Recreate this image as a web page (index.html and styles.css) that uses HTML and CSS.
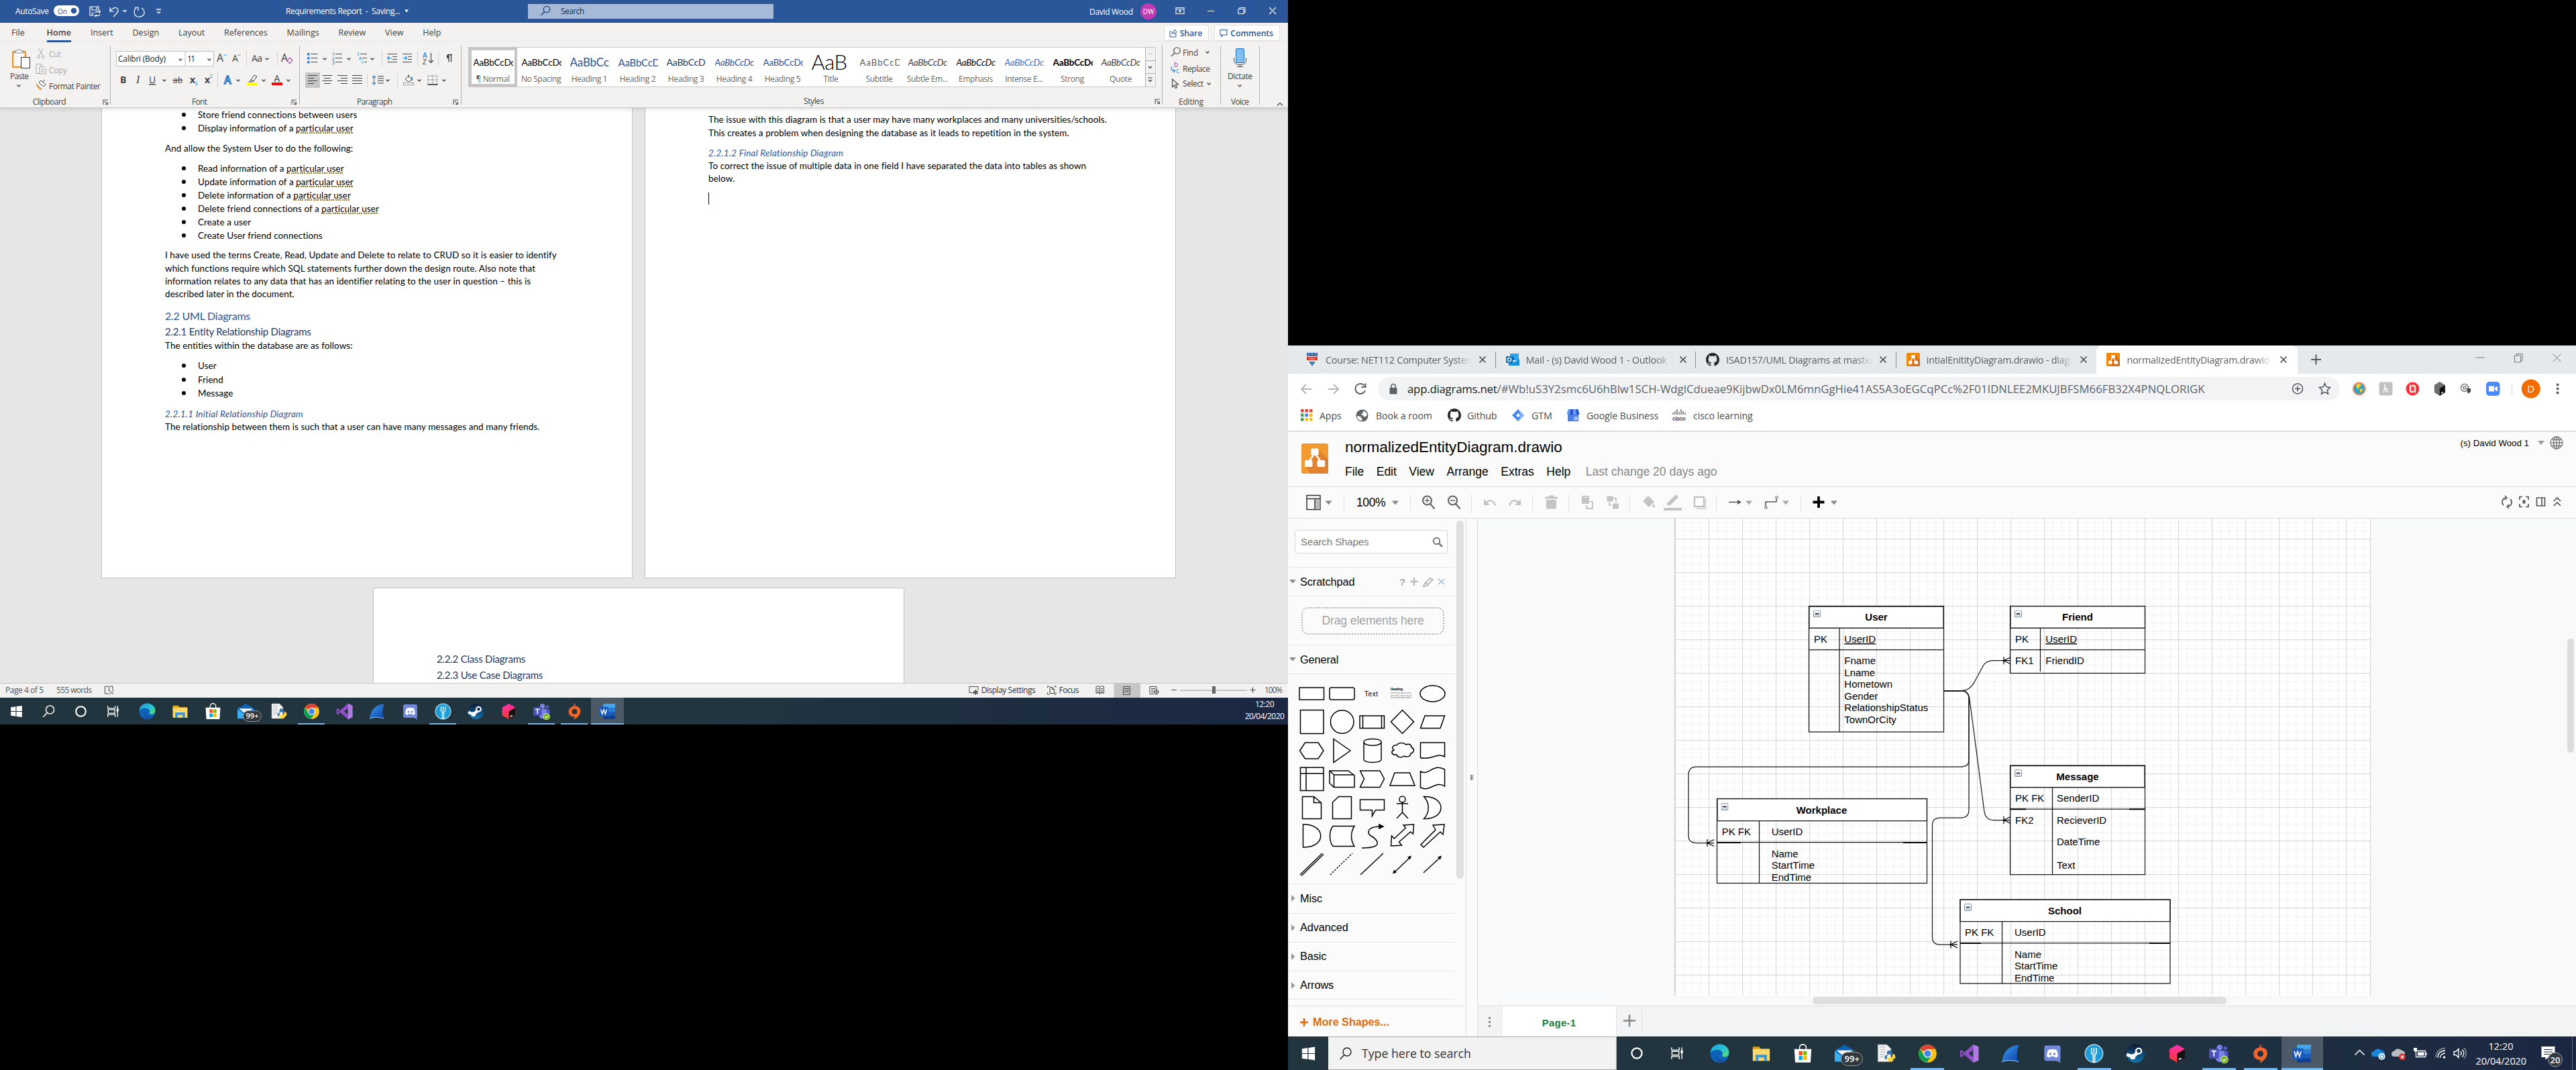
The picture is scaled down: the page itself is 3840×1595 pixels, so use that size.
FILE: index.html
```html
<!DOCTYPE html>
<html lang="en">
<head>
<meta charset="utf-8">
<title>Desktop</title>
<link rel="stylesheet" href="styles.css">
</head>
<body>
<svg class="defs" width="0" height="0" aria-hidden="true">
  <defs>
    <linearGradient id="edgeA" x1="0" y1="0" x2="1" y2="1"><stop offset="0" stop-color="#1b9de2"/><stop offset=".55" stop-color="#2bc3d2"/><stop offset="1" stop-color="#5fe05a"/></linearGradient>
    <linearGradient id="sharkA" x1="0" y1="0" x2="1" y2="1"><stop offset="0" stop-color="#3aa0f0"/><stop offset="1" stop-color="#0b3fa8"/></linearGradient>
    <linearGradient id="redA" x1="0" y1="0" x2="0" y2="1"><stop offset="0" stop-color="#ff2fb0"/><stop offset="1" stop-color="#ff3a2a"/></linearGradient>
    <linearGradient id="steamA" x1="0" y1="0" x2="0" y2="1"><stop offset="0" stop-color="#0b1838"/><stop offset="1" stop-color="#1277b0"/></linearGradient>
    <pattern id="minor" width="12.5" height="12.5" patternUnits="userSpaceOnUse" x="2547.5" y="803.5"><path d="M0 .5H12.5M.5 0V12.5" stroke="#f2f2f2" fill="none"/></pattern>
    <pattern id="major" width="50" height="50" patternUnits="userSpaceOnUse" x="2547" y="803"><path d="M0 .5H50M.5 0V50" stroke="#d9d9d9" fill="none"/></pattern>
    <linearGradient id="btn" x1="0" y1="0" x2="0" y2="1"><stop offset="0" stop-color="#fff"/><stop offset="1" stop-color="#c3d0dc"/></linearGradient>
    <symbol id="chev" viewBox="0 0 8 6"><path d="M1.5 1.5 4 4 6.500 1.500" fill="none" stroke="#444" stroke-width="1.300"/></symbol>
    <symbol id="launch" viewBox="0 0 9 9"><path d="M1 8V1H8M3 3 7.500 7.500M7.500 4V7.500H4" fill="none" stroke="#555" stroke-width="1.100"/></symbol>
    <symbol id="win" viewBox="0 0 24 24"><path d="M4 6 11 5V11.500H4ZM12 4.900 20 3.800V11.500H12ZM4 12.500H11V19L4 18ZM12 12.500H20V20.200L12 19.100Z" fill="#fff"/></symbol>
    <symbol id="mag" viewBox="0 0 24 24"><circle cx="14" cy="9.500" r="5.800" fill="none" stroke="#fff" stroke-width="1.400"/><path d="M10 13.800 4 20" stroke="#fff" stroke-width="1.400"/></symbol>
    <symbol id="cort" viewBox="0 0 24 24"><circle cx="12" cy="12" r="7" fill="none" stroke="#fff" stroke-width="2"/></symbol>
    <symbol id="tview" viewBox="0 0 24 24"><path d="M4.500 4V7.500H15V4M4.500 20V16.500H15V20M5 9.500H14.500V14.500H5ZM18.500 4V20" fill="none" stroke="#fff" stroke-width="1.300"/><path d="M17 8h3v4h-3z" fill="#fff"/></symbol>
    <symbol id="edge" viewBox="0 0 24 24"><circle cx="12" cy="12" r="11.500" fill="#0d63b8"/><path d="M.6 11C1 4.500 6 .5 12 .5c7 0 11.500 5 11.500 10 0 3.500-2.500 5.500-5.500 5.500-2 0-3.500-.5-3-2 .8-1 .8-2 .5-3C14.500 8 11 7 8 7.300 4 7.700 1.500 9.500.6 11Z" fill="url(#edgeA)"/><path d="M8.500 13.500c0 4 4 7 8.500 6.500 2-.2 3.500-1 4.500-1.700C19 22.500 15.500 23.500 12 23.500 9 22 7 18.500 8.500 13.500Z" fill="#1a4fa0"/></symbol>
    <symbol id="folder" viewBox="0 0 24 24"><path d="M1.500 3.500h8l2 2.500H22v4H1.500Z" fill="#e0a012"/><path d="M1.500 6.500H22.500V21H1.500Z" fill="#ffd867"/><path d="M5 21V13.500H19V21H15.500V17H8.500V21Z" fill="#3b97d9"/></symbol>
    <symbol id="store" viewBox="0 0 24 24"><path d="M8 7V4.500a4 3.800 0 0 1 8 0V7" fill="none" stroke="#fff" stroke-width="1.300"/><path d="M1.500 6.500h21L21.500 23h-19Z" fill="#fff"/><path d="M7 9h4.500v5H7Z" fill="#f25022"/><path d="M12.500 9H17v5h-4.500Z" fill="#7fba00"/><path d="M7 15h4.500v5H7Z" fill="#00a4ef"/><path d="M12.500 15H17v5h-4.500Z" fill="#ffb900"/></symbol>
    <symbol id="mail" viewBox="0 0 24 24"><path d="M0 8 12 1 24 8V21H0Z" fill="#0b64b5"/><path d="M2 8H22L12 16Z" fill="#f4f4f4"/><path d="M0 9 12 17 24 9V22H0Z" fill="#35b0f2"/></symbol>
    <symbol id="pyf" viewBox="0 0 24 24"><path d="M2 1H13L18 6V22H2Z" fill="#f3f3f3" stroke="#bbb" stroke-width=".6"/><path d="M4 4h7M4 7h7M4 10h7M4 13h6M4 16h5" stroke="#aaa" stroke-width=".8"/><path d="M17 8c-3 0-4 1-4 3v2h4.500v1H12c-1.500 0-2.500 2-1 5h2v-2c0-2 1-3 3-3h3V10c0-1-1-2-2-2Z" fill="#3776ab"/><path d="M20 12v2c0 2-1 3-3 3h-3v3c0 1.500 1.500 2 3.500 2s3.500-1 3.500-2v-1.500h2c1-2 .5-6-3-6.500Z" fill="#ffd43b"/></symbol>
    <symbol id="chrome" viewBox="0 0 24 24"><circle cx="12" cy="12" r="11" fill="#fbc116"/><path d="M12 12 2.500 6.500A11 11 0 0 1 21.500 6.500H12Z" fill="#db4437"/><path d="M2.500 6.500A11 11 0 0 0 11 23L16.700 14.700 12 12 7 13.500Z" fill="#0f9d58"/><circle cx="12" cy="12" r="5.200" fill="#fff"/><circle cx="12" cy="12" r="4.200" fill="#4285f4"/></symbol>
    <symbol id="vs" viewBox="0 0 24 24"><path d="M17 .8 23.500 3.500V20.500L17 23.200 6 13.500 2.500 16.500.8 15.500V8.500L2.500 7.500 6 10.500ZM17 7.500 11.500 12 17 16.500ZM2.800 10V14L5 12Z" fill="#8c4fc4" fill-rule="evenodd"/><path d="M17 .8 23.500 3.500V20.500L17 23.200Z" fill="#b07ae0"/></symbol>
    <symbol id="shark" viewBox="0 0 24 24"><path d="M1 22C3 9 10 2 22 1.500 19 8 19 15 21.500 22 15 20 7 20 1 22Z" fill="url(#sharkA)"/><path d="M1 22C7 20 15 20 21.500 22" stroke="#7ab6ff" stroke-width="1" fill="none"/></symbol>
    <symbol id="discord" viewBox="0 0 24 24"><rect x="2" y="2" width="20" height="19" rx="2.500" fill="#7289da"/><path d="M17 21H22V23.500Z" fill="#7289da"/><path d="M7 7.500C10 6.300 14 6.300 17 7.500 18.500 10 19 13 18.800 15.500 17.500 16.700 16.500 17 15.500 17L14.500 15.600H9.500L8.500 17C7.500 17 6.500 16.700 5.200 15.500 5 13 5.500 10 7 7.500Z" fill="#fff"/><circle cx="9.500" cy="12.500" r="1.500" fill="#7289da"/><circle cx="14.500" cy="12.500" r="1.500" fill="#7289da"/></symbol>
    <symbol id="fork" viewBox="0 0 24 24"><circle cx="12" cy="12" r="11" fill="#1d9cd8" stroke="#cfeaf7" stroke-width="1"/><path d="M9 5V10.500C9 12 10 13 11 13.300V22.500H13V13.300C14 13 15 12 15 10.500V5M12 5V12" fill="none" stroke="#fff" stroke-width="1.300"/></symbol>
    <symbol id="steam" viewBox="0 0 24 24"><circle cx="12" cy="12" r="11.300" fill="url(#steamA)"/><path d="M1 13 8 16" stroke="#fff" stroke-width="4"/><circle cx="15.800" cy="8.800" r="4.300" fill="#fff"/><circle cx="15.800" cy="8.800" r="2.300" fill="#12305c"/><circle cx="8.500" cy="16" r="3.300" fill="#fff"/><path d="M9 13 13 9 16 12.500 11 16.500Z" fill="#fff"/></symbol>
    <symbol id="hex" viewBox="0 0 24 24"><path d="M12 1 21.500 6.500V17.500L12 23 2.500 17.500V6.500Z" fill="url(#redA)"/><path d="M12 12 21.500 6.500V17.500L12 23Z" fill="#111"/><path d="M14 19.500 17 17.800" stroke="#fff" stroke-width="1.500"/></symbol>
    <symbol id="teams" viewBox="0 0 24 24"><circle cx="13" cy="4.500" r="3.500" fill="#7b83eb"/><circle cx="20" cy="5.500" r="2.500" fill="#5059c9"/><path d="M8 8.500H19V17a5 5 0 0 1-11 0Z" fill="#7b83eb"/><path d="M19 9h4.500v6a3 3 0 0 1-4.500 3Z" fill="#5059c9"/><rect y="6" width="12" height="12" rx="1" fill="#4b53bc"/><path d="M3 9H9M6 9V15.500" stroke="#fff" stroke-width="1.500"/><circle cx="19" cy="19.500" r="4.500" fill="#6bb700" stroke="#e8f5d8" stroke-width=".8"/><path d="M16.800 19.500 18.500 21.200 21.300 18" stroke="#fff" fill="none" stroke-width="1.200"/></symbol>
    <symbol id="origin" viewBox="0 0 24 24"><path d="M13.500 0C11 2 10.500 3 11 4.500 6 5 3.500 8.500 3.500 12.500 3.500 17 7 19.800 12 20 12 22 11.500 23 10.500 24 14.500 22 20.500 18 20.500 11.500 20.500 7 17 4.500 13 4.300 12.500 3 12.500 2 13.500 0ZM12 8.500a3.700 3.700 0 1 1 0 7.400 3.700 3.700 0 0 1 0-7.400Z" fill="#f0652a" fill-rule="evenodd"/></symbol>
    <symbol id="word" viewBox="0 0 24 24"><path d="M6 1H23V7H6Z" fill="#41a5ee"/><path d="M6 7H23V12.500H6Z" fill="#2b7cd3"/><path d="M6 12.500H23V18H6Z" fill="#185abd"/><path d="M6 18H23V23H6Z" fill="#103f91"/><rect x="0" y="5.500" width="13.500" height="13.500" rx="1" fill="#185abd"/><path d="M2.500 9 4.500 15.500 6.700 9.500 9 15.500 11 9" stroke="#fff" fill="none" stroke-width="1.400"/></symbol>
    <symbol id="gh" viewBox="0 0 16 16"><path fill="#24292e" fill-rule="evenodd" d="M8 0C3.580 0 0 3.580 0 8c0 3.540 2.290 6.530 5.470 7.590.4.070.550-.17.550-.38 0-.19-.01-.82-.01-1.490-2.010.37-2.530-.49-2.690-.94-.09-.23-.48-.94-.82-1.130-.28-.15-.68-.52-.01-.53.630-.01 1.080.58 1.230.82.720 1.210 1.870.87 2.330.66.070-.52.280-.87.510-1.070-1.780-.2-3.640-.89-3.640-3.950 0-.87.310-1.590.82-2.150-.08-.2-.36-1.020.08-2.120 0 0 .67-.21 2.200.82.640-.18 1.320-.27 2-.27s1.360.09 2 .27c1.530-1.040 2.200-.82 2.200-.82.440 1.100.16 1.920.08 2.120.51.560.82 1.270.82 2.150 0 3.070-1.870 3.750-3.650 3.950.29.25.54.730.54 1.480 0 1.070-.01 1.930-.01 2.200 0 .21.150.46.550.38A8.010 8.010 0 0 0 16 8c0-4.420-3.580-8-8-8Z"/></symbol>
    <symbol id="dio" viewBox="0 0 20 20"><rect width="20" height="20" rx="1.500" fill="#f08705"/><path d="M12 3 20 11V18.500Q20 20 18.500 20H8L4 16 9 9Z" fill="#df6c0c"/><path d="M9.800 6 6 13M10.200 6 14 13" stroke="#fff" stroke-width="1.300"/><rect x="7.200" y="3.200" width="5.600" height="4.600" rx=".8" fill="#fff"/><rect x="3" y="12" width="5.500" height="4.800" rx=".8" fill="#fff"/><rect x="11.500" y="12" width="5.500" height="4.800" rx=".8" fill="#fff"/></symbol>
    <symbol id="close" viewBox="0 0 12 12"><path d="M1.500 1.500 10.500 10.500M10.500 1.500 1.500 10.500" stroke="#4a4d51" stroke-width="1.700"/></symbol>
    <symbol id="foot" viewBox="-12 -7 14 14" overflow="visible"><path d="M-12 0H0M-10 -5.500V5.500M0 -5-10 0 0 5" fill="none" stroke="#000" stroke-width="1.250"/></symbol>
    <symbol id="fold" viewBox="0 0 11 11"><rect x=".5" y=".5" width="10" height="10" rx="1" fill="url(#btn)" stroke="#8496a8"/><path d="M3 5.500H8" stroke="#000" stroke-width="1.300"/></symbol>
  </defs>
</svg>

<section class="screen left">
  <header class="w-title">
    <svg class="w-bar" viewBox="0 0 1920 34">
      <rect x="787" y="6" width="366" height="22" fill="#a6b9d6"/>
      <text x="23" y="21" textLength="50" class="wt">AutoSave</text>
      <rect x="80" y="8" width="38" height="16" rx="8" fill="#fff"/><text x="86" y="20.500" class="on">On</text><circle cx="110" cy="16" r="4.300" fill="#2b579a"/>
      <g fill="none" stroke="#fff" stroke-width="1.200"><path d="M134 10h13v6M134 10v13h6M137 10v5h7v-5M137.500 23v-4h3"/><path d="M142 19a4 4 0 0 1 6.500-1M149 15v3.500h-3.500M149 21a4 4 0 0 1-6.500 1.500M142 25.500V22.500h3"/><path d="M164 11v6h6M164.500 16.500C168 11 173 10 175.500 13.500 177.500 17 173 21 169 25"/><path d="M183.500 15 186 17.500 188.500 15" stroke-width="1.500"/><path d="M203 12C199 15 199 22 204 24.500 210 27 216 22.500 215 17.500 214.500 14.500 213 13 211 12M201 11h5v5" /><path d="M233 14h7M234 17 236.500 19.500 239 17" stroke-width="1.300"/></g>
      <text x="426" y="20.500" textLength="171" class="wt" xml:space="preserve">Requirements Report  -  Saving...</text><path d="M603 14.500h6l-3 4Z" fill="#fff"/>
      <g fill="none" stroke="#1f3f78" stroke-width="1.300"><circle cx="815" cy="14" r="4.700"/><path d="M811.500 17.500 806.500 23"/></g><text x="836" y="21" textLength="35" class="wt navy">Search</text>
      <text x="1624" y="22" textLength="65" class="wt">David Wood</text><circle cx="1712" cy="17" r="12" fill="#c239b3"/><text x="1712" y="21" class="av">DW</text>
      <g fill="none" stroke="#fff" stroke-width="1.100"><path d="M1753 11.500h12v9h-12ZM1753 13.500h12M1759 19v-4M1757 17l2-2 2 2M1800 16.500h10M1846 13.500h8v7h-8ZM1848 13.500v-2h8v7h-2M1892 11l10 10M1902 11l-10 10"/></g>
    </svg>
  </header>
  <nav class="w-tabs">
    <span class="t1">File</span><b>Home</b><span>Insert</span><span>Design</span><span>Layout</span><span>References</span><span>Mailings</span><span>Review</span><span>View</span><span>Help</span>
    <div class="w-act">
      <button><svg width="12" height="14" viewBox="0 0 12 14"><path d="M3.500 5H1V13H10V8M4 9C4 6 6 4.500 8 4.500V2L11.500 5.500 8 9V6.500C6 6.500 5 7 4 9Z" fill="none" stroke="#2b579a"/></svg>Share</button>
      <button><svg width="12" height="13" viewBox="0 0 12 13"><path d="M1 1.500H11V9H5L3 11.500V9H1Z" fill="none" stroke="#2b579a" stroke-width="1.100"/></svg>Comments</button>
    </div>
  </nav>
  <div class="ribbon">
    <section class="g g1"><svg viewBox="0 63 164 97">
      <path d="M19 77h19v23H19z" fill="#ffe4b0" stroke="#e07a10" stroke-width="1.500"/><path d="M22 79v-3h3a4 4 0 0 1 7 0h3v3Z" fill="#fff" stroke="#666"/><path d="M21.500 79.500h14V86H31v12h-9.500Z" fill="#fafafa"/><rect x="31.500" y="85.500" width="13" height="16" fill="#fff" stroke="#333"/>
      <text x="15" y="117.500" textLength="28">Paste</text><use href="#chev" x="24" y="125" width="8" height="6"/>
      <g stroke="#aaa" fill="none"><path d="M57.500 72 64 83M64.500 72 58 83"/><circle cx="57.500" cy="85" r="1.800"/><circle cx="64.500" cy="85" r="1.800"/><path d="M59 109.500h-5v-14h8v3M59 99.500h6l3.500 3.500v7H59ZM61 104h5M61 107h5"/></g>
      <text x="73" y="84.500" textLength="18" class="dis">Cut</text><text x="73" y="109" textLength="27" class="dis">Copy</text>
      <path d="M54 125l8 8c-2 1-4 1-8-8Z" fill="#f7b254" stroke="#e07a10"/><path d="M58 123l7 6 3-3-7-6ZM63 123l4-4" fill="#fff" stroke="#444"/>
      <text x="73" y="132.500" textLength="77">Format Painter</text>
      <text x="48.700" y="156" textLength="50">Clipboard</text><use href="#launch" x="153" y="148" width="9" height="9"/></svg></section>
    <section class="g g2"><svg viewBox="165 63 281 97">
      <path d="M173.500 76.500h145v22h-145ZM276 76.500v22" fill="#fff" stroke="#c0c0c0"/><text x="176" y="92" textLength="71" class="k">Calibri (Body)</text><text x="279" y="92" textLength="12" class="k">11</text><use href="#chev" x="265" y="86" width="8" height="6"/><use href="#chev" x="308" y="86" width="8" height="6"/>
      <text x="323" y="92" class="i16">A</text><path d="M333.500 83.500l2-2 2 2M354.500 81l2 2 2-2" stroke="#2b88d8" fill="none"/><text x="346" y="92" class="i14">A</text>
      <path d="M367.500 77v21M413.500 77v21M324.500 109v21" stroke="#d0d0d0"/><text x="375" y="92" textLength="16" class="i14">Aa</text><use href="#chev" x="394" y="85" width="8" height="6"/>
      <text x="419" y="92" class="i16">A</text><path d="M428 91l4-5 4 3.500-4 5Z" fill="#fff" stroke="#a33ba8" stroke-width="1.200"/>
      <text x="179" y="124" class="i14 bb">B</text><text x="203" y="124" class="i14 se">I</text><text x="222" y="124" class="i14 un">U</text><use href="#chev" x="241" y="117" width="8" height="6"/>
      <text x="258" y="124" class="i12">ab</text><path d="M257 119.500h15" stroke="#444"/>
      <text x="283" y="124" class="i14 bb">x</text><text x="290.500" y="127" class="i8">2</text><text x="305" y="124" class="i14 bb">x</text><text x="312.500" y="116" class="i8">2</text>
      <text x="334" y="125" class="glow">A</text><use href="#chev" x="351" y="117" width="8" height="6"/>
      <path d="M374 119l5-7 4 2-5 7ZM374 119l-3 3h4l3-1" fill="none" stroke="#444"/><rect x="368" y="123" width="16" height="4" fill="#ff0"/><use href="#chev" x="389" y="117" width="8" height="6"/>
      <text x="408.500" y="121.500" class="i14">A</text><rect x="405" y="123" width="16" height="4" fill="#f00"/><use href="#chev" x="426" y="117" width="8" height="6"/>
      <text x="286" y="156" textLength="23">Font</text><use href="#launch" x="434" y="148" width="9" height="9"/></svg></section>
    <section class="g g3"><svg viewBox="447 63 240 97">
      <g fill="#2b88d8"><path d="M458 79h3.500v3.500H458ZM458 85h3.500v3.500H458ZM458 91h3.500v3.500H458Z"/></g>
      <g stroke="#444" stroke-width="1.200" fill="none"><path d="M463.500 80.500h10M463.500 86.500h10M463.500 92.500h10M500 80.500h10M500 86.500h10M500 92.500h10M537 80.500h10M540 86.500h7M543 92.500h4M577.500 80.500h14.500M585 84.500h7M585 88.500h7M577.500 92.500h14.500M600 80.500h14M608 84.500h6M608 88.500h6M600 92.500h14"/></g>
      <g class="nums"><text x="495" y="83">1</text><text x="495" y="89.500">2</text><text x="495" y="96">3</text><text x="532" y="82.500">1</text><text x="535" y="89">a</text><text x="539" y="95">i</text></g>
      <path d="M584 86.500h-6M580 84l-2.500 2.500L580 89M600 86.500h6M604 84l2.500 2.500L604 89" stroke="#2b88d8" fill="none" stroke-width="1.200"/>
      <use href="#chev" x="480" y="85" width="8" height="6"/><use href="#chev" x="516" y="85" width="8" height="6"/><use href="#chev" x="551" y="85" width="8" height="6"/>
      <path d="M569.500 77v21M622.500 77v21M653.500 77v21M547.500 109v21M592.500 109v21" stroke="#d0d0d0"/>
      <text x="630" y="86" class="sa">A</text><text x="630" y="95.500" class="sz">Z</text><path d="M642.500 79v14M639 90l3.500 3.500L646 90" stroke="#444" fill="none" stroke-width="1.200"/><path d="M669 81.500h5M669 81v11.500M672.500 81v11.500" stroke="#444" stroke-width="1.300"/><path d="M669 81a3 3 0 0 0 0 6.500Z" fill="#444"/>
      <rect x="455" y="108" width="22" height="23" fill="#c6c6c6"/>
      <g stroke="#444" stroke-width="1.200" fill="none"><path d="M459 112.500h14M459 116.500h9M459 120.500h14M459 124.500h9M480.500 112.500h15M483 116.500h10M480.500 120.500h15M483 124.500h10M503 112.500h15M508 116.500h10M503 120.500h15M508 124.500h10M525 112.500h15M525 116.500h15M525 120.500h15M525 124.500h15M563 113.500h9M563 117h9M563 120.500h9M563 124h9"/></g>
      <path d="M557.500 114v11M555 116l2.500-3 2.500 3M555 123l2.500 3 2.500-3" stroke="#2b88d8" fill="none" stroke-width="1.200"/><use href="#chev" x="574" y="117" width="8" height="6"/>
      <path d="M604 118l5-5 5 5-5 4ZM609 111v5" fill="#fff" stroke="#444"/><path d="M614 115v5" stroke="#2b88d8" stroke-width="2"/><rect x="601.500" y="123.500" width="15" height="3" fill="#fff" stroke="#999"/><use href="#chev" x="621" y="117" width="8" height="6"/>
      <path d="M638 113h14M638 119h14M638 113v12M645 113v12M651.500 113v12" stroke="#444" stroke-dasharray="1 1.500"/><path d="M637.500 126h15" stroke="#222" stroke-width="1.500"/><use href="#chev" x="658" y="117" width="8" height="6"/>
      <text x="532" y="156" textLength="53">Paragraph</text><use href="#launch" x="675" y="148" width="9" height="9"/></svg></section>
    <section class="g g4">
      <div class="gal">
        <div class="st sel"><i>AaBbCcDc</i><span>¶ Normal</span></div><div class="st"><i>AaBbCcDc</i><span>No Spacing</span></div><div class="st h1"><i>AaBbCc</i><span>Heading 1</span></div><div class="st h2"><i>AaBbCcD</i><span>Heading 2</span></div><div class="st h3"><i>AaBbCcD</i><span>Heading 3</span></div><div class="st h4"><i>AaBbCcDc</i><span>Heading 4</span></div><div class="st h5"><i>AaBbCcDc</i><span>Heading 5</span></div><div class="st ti"><i>AaB</i><span>Title</span></div><div class="st su"><i>AaBbCcD</i><span>Subtitle</span></div><div class="st it"><i>AaBbCcDc</i><span>Subtle Em...</span></div><div class="st it em"><i>AaBbCcDc</i><span>Emphasis</span></div><div class="st it in"><i>AaBbCcDc</i><span>Intense E...</span></div><div class="st bo"><i>AaBbCcDc</i><span>Strong</span></div><div class="st it"><i>AaBbCcDc</i><span>Quote</span></div>
        <div class="gs"><svg width="15" height="58" viewBox="0 0 15 58"><path d="M0 19.500h15M0 38.500h15M.5 0v58" stroke="#ababab" fill="none"/><path d="M5 10.500l2.500-2.500 2.500 2.500" stroke="#aaa" fill="none"/><path d="M5 28l2.500 2.500 2.500-2.500M4.500 45h6M5 48l2.500 2.500 2.500-2.500" stroke="#333" fill="none" stroke-width="1.200"/></svg></div>
      </div>
      <div class="gl"><span></span><span>Styles</span><svg width="9" height="9"><use href="#launch"/></svg></div>
    </section>
    <section class="g g5"><svg viewBox="1733 63 86 97">
      <g fill="none" stroke="#444" stroke-width="1.100"><circle cx="1754.500" cy="75.500" r="4.800"/><path d="M1751 79l-5 5M1747.500 118v12l3-3 2 4.500 2-1-2-4.500h4Z"/></g>
      <text x="1763" y="83" textLength="23">Find</text><text x="1763" y="106.500" textLength="41">Replace</text><text x="1763" y="129" textLength="31">Select</text><use href="#chev" x="1796" y="75" width="8" height="6"/><use href="#chev" x="1798" y="122" width="8" height="6"/>
      <text x="1750" y="100" class="rb">b</text><text x="1753" y="109" class="rc">c</text><path d="M1747 99c-3 4 0 7 4 6.500M1749 103.500l2.500 2-2 2.500" stroke="#2b88d8" fill="none" stroke-width="1.200"/>
      <text x="1757" y="156" textLength="37">Editing</text></svg></section>
    <section class="g g6"><svg viewBox="1820 63 57 97"><rect x="1842.500" y="72.500" width="12" height="21" rx="1.500" fill="#83beec" stroke="#1a6fb8"/><path d="M1839.500 86v4c0 4 3 6.500 9 6.500s9-2.500 9-6.500v-4M1848.500 96v3M1844 99.500h9" fill="none" stroke="#444"/><text x="1830" y="117.500" textLength="37">Dictate</text><use href="#chev" x="1844" y="125" width="8" height="6"/><text x="1835" y="156" textLength="27">Voice</text></svg></section>
    <svg class="col" width="12" height="8" viewBox="0 0 12 8"><path d="M2 6.500 6 2.500 10 6.500" fill="none" stroke="#444" stroke-width="1.200"/></svg>
  </div>
  <main class="desk">
    <div class="pages">
      <article class="page p1">
        <ul><li>Store friend connections between users</li><li>Display information of a <u>particular user</u></li></ul>
        <p class="m10">And allow the System User to do the following:</p>
        <ul class="m10"><li>Read information of a <u>particular user</u></li><li>Update information of a <u>particular user</u></li><li>Delete information of a <u>particular user</u></li><li>Delete friend connections of a <u>particular user</u></li><li>Create a user</li><li>Create User friend connections</li></ul>
        <p class="m10 para">I have used the terms Create, Read, Update and Delete to relate to CRUD so it is easier to identify<br>which functions require which SQL statements further down the design route. Also note that<br>information relates to any data that has an identifier relating to the user in question – this is<br>described later in the document.</p>
        <h2>2.2 UML Diagrams</h2>
        <h3>2.2.1 Entity Relationship Diagrams</h3>
        <p class="para">The entities within the database are as follows:</p>
        <ul class="m10 ents"><li>User</li><li>Friend</li><li>Message</li></ul>
        <h4>2.2.1.1 Initial Relationship Diagram</h4>
        <p class="para">The relationship between them is such that a user can have many messages and many friends.</p>
      </article>
      <article class="page p2">
        <p>The issue with this diagram is that a user may have many workplaces and many universities/schools.<br>This creates a problem when designing the database as it leads to repetition in the system.</p>
        <h4>2.2.1.2 Final Relationship Diagram</h4>
        <p class="para">To correct the issue of multiple data in one field I have separated the data into tables as shown<br>below.</p>
        <div class="caret"></div>
      </article>
    </div>
    <article class="page p3"><h3>2.2.2 Class Diagrams</h3><h3>2.2.3 Use Case Diagrams</h3></article>
  </main>
  <footer class="status"><svg viewBox="0 1019 1920 21">
    <rect x="1660.500" y="1019" width="39.500" height="21" fill="#c8c6c4"/>
    <text x="8" y="1032.500" textLength="57">Page 4 of 5</text><text x="84" y="1032.500" textLength="53">555 words</text>
    <path d="M163 1034h-6.500v-11h4l1.500 1.500 1.500-1.500h4.500v6M162.500 1024.500v6M163.500 1029.500l6 6M169.500 1029.500l-6 6" fill="none" stroke="#444"/>
    <g fill="none" stroke="#444"><path d="M1452 1032.500h-7v-9h13v5"/><circle cx="1454.500" cy="1032" r="2.500"/><path d="M1454.500 1028v8M1451 1030l7 4M1451 1034l7-4M1561.500 1025v-2h3M1571 1023h3v2M1561.500 1032v3h3M1571 1035h3v-3M1565 1024.500h3.500l3 3v6h-6.500ZM1568.500 1024.500v3h3"/><path d="M1639.500 1024v11M1634 1023.500c2-1 4-1 5.500 0 1.500-1 4-1 6 0v10c-2-1-4-1-6 0-1.500-1-4-1-5.500 0ZM1635.500 1026.500h2.500M1635.500 1029h2.500M1635.500 1031.500h2.500M1641 1026.500h3M1641 1029h3M1641 1031.500h3M1674.500 1023.500h10v12h-10ZM1676 1026.500h7M1676 1029h7M1676 1031.500h7M1720 1034.500h-6v-11h10v4M1716 1026.500h6M1716 1029h3M1716 1031.500h3"/><circle cx="1723.500" cy="1031.500" r="3.500"/><path d="M1720 1031.500h7M1723.500 1028v7"/></g>
    <text x="1462.700" y="1033" textLength="81" class="dk">Display Settings</text><text x="1578.500" y="1033" textLength="30" class="dk">Focus</text>
    <path d="M1746 1028.500h8M1863.500 1028.500h8M1867.500 1024.500v8" stroke="#444" stroke-width="1.200"/><path d="M1759 1029h100" stroke="#999"/><rect x="1807" y="1023" width="5" height="11" fill="#666"/>
    <text x="1885" y="1032.500" textLength="27">100%</text></svg></footer>
  <footer class="task tl">
    <div class="tk s"><svg><use href="#win"/></svg></div><div class="tk s"><svg><use href="#mag"/></svg></div><div class="tk s"><svg><use href="#cort"/></svg></div><div class="tk s"><svg><use href="#tview"/></svg></div>
    <div class="tk"><svg><use href="#edge"/></svg></div><div class="tk"><svg><use href="#folder"/></svg></div><div class="tk"><svg><use href="#store"/></svg></div><div class="tk"><svg><use href="#mail"/></svg><em>99+</em></div><div class="tk"><svg><use href="#pyf"/></svg></div><div class="tk run"><svg><use href="#chrome"/></svg></div><div class="tk"><svg><use href="#vs"/></svg></div><div class="tk"><svg><use href="#shark"/></svg></div><div class="tk"><svg><use href="#discord"/></svg></div><div class="tk run"><svg><use href="#fork"/></svg></div><div class="tk"><svg><use href="#steam"/></svg></div><div class="tk"><svg><use href="#hex"/></svg></div><div class="tk run"><svg><use href="#teams"/></svg></div><div class="tk run"><svg><use href="#origin"/></svg></div><div class="tk run act"><svg><use href="#word"/></svg></div>
    <div class="clock"><span>12:20</span><span>20/04/2020</span></div>
  </footer>
</section>

<section class="screen right">
  <div class="c-tabs">
    <div class="ct"><svg width="18" height="20" viewBox="0 0 18 20"><path d="M1 0H17V10C17 15 13 18 9 20 5 18 1 15 1 10Z" fill="#f3f0e6"/><path d="M1 0H17V5H1Z" fill="#2a5ea8"/><path d="M4 1v3M9 1v3M14 1v3" stroke="#e9c64a" stroke-width="1.500"/><path d="M1 6H17V11H1Z" fill="#d8392b"/><path d="M5 7l2 3M9 7v3M13 7l-2 3" stroke="#fff"/><path d="M4 13H14L9 20Z" fill="#3b7cc0"/></svg><span>Course: NET112 Computer Systems</span><svg class="x"><use href="#close"/></svg></div>
    <div class="ct"><svg width="20" height="18" viewBox="0 0 20 18"><path d="M6 0H19V10H6Z" fill="#28a8ea"/><path d="M6 5H12V10H6Z" fill="#0364b8"/><path d="M4 8 12 13 20 8V18H4Z" fill="#1490df"/><rect y="4" width="10" height="10" rx="1" fill="#0f6cbd"/><circle cx="5" cy="9" r="2.600" fill="none" stroke="#fff" stroke-width="1.400"/></svg><span>Mail - (s) David Wood 1 - Outlook</span><svg class="x"><use href="#close"/></svg></div>
    <div class="ct"><svg width="20" height="20"><use href="#gh"/></svg><span>ISAD157/UML Diagrams at master</span><svg class="x"><use href="#close"/></svg></div>
    <div class="ct last"><svg width="20" height="20"><use href="#dio"/></svg><span>intialEnitityDiagram.drawio - diagrams</span><svg class="x"><use href="#close"/></svg></div>
    <div class="ct on"><svg width="20" height="20"><use href="#dio"/></svg><span>normalizedEntityDiagram.drawio</span><svg class="x"><use href="#close"/></svg></div>
    <svg class="c-win" viewBox="3425 515 415 42"><path d="M3445 536h15M3452.500 528.500v15" stroke="#55585c" stroke-width="2"/><path d="M3690.500 533h13M3748.500 530h9v10h-9ZM3751 530v-2.500h9v10h-2.500M3805.500 527.500l12 12M3817.500 527.500l-12 12" stroke="#777" fill="none"/></svg>
  </div>
  <div class="c-bar">
    <svg class="c-nav" viewBox="1920 557 134 46"><g fill="none" stroke-width="2"><path d="M1955 580h-15M1947 573l-7 7 7 7M1980 580h15M1988 573l7 7-7 7" stroke="#b4b7ba"/><path d="M2034 575a7.500 7.500 0 1 0 1 7M2035.500 571.500v5.500h-6" stroke="#5f6368"/></g></svg>
    <div class="omni"><svg width="14" height="18" viewBox="0 0 14 18"><path d="M1.500 7h11v9.500h-11z" fill="#5f6368"/><path d="M4 7V4.500a3 3 0 0 1 6 0V7" fill="none" stroke="#5f6368" stroke-width="1.700"/></svg><span class="url"><b>app.diagrams.net</b>/#Wb!uS3Y2smc6U6hBlw1SCH-WdglCdueae9KijbwDx0LM6mnGgHie41AS5A3oEGCqPCc%2F01IDNLEE2MKUJBFSM66FB32X4PNQLORIGK</span>
      <svg class="oi" width="60" height="22" viewBox="3417 569 60 22"><g fill="none" stroke="#55585c" stroke-width="1.600"><circle cx="3426" cy="579.500" r="7.500"/><path d="M3422 579.500h8M3426 575.500v8"/><path d="M3466.500 571.500l2.400 5.300 5.600.7-4.100 4 1 5.700-4.900-2.800-4.900 2.800 1-5.700-4.100-4 5.600-.7Z"/></g></svg></div>
    <svg class="c-ext" viewBox="3488 557 352 46">
      <circle cx="3516.800" cy="579.500" r="9" fill="#25a6c9" stroke="#ff8a65" stroke-width="2"/><path d="M3512 574c3-3 7-2 8 0-1 3-3 2-4 5s-3 0-4-5ZM3518 580l4-1c0 4-2 6-4 6Z" fill="#ffc928"/>
      <rect x="3546.500" y="569.500" width="20" height="20" rx="3" fill="#c1c1c1"/><path d="M3554 573c2 0 1 8-1 12M3554 581c2-3 5-3 4 0-2 2 0 4 2 3" stroke="#fff" fill="none" stroke-width="1.500"/>
      <circle cx="3596.400" cy="579.500" r="10" fill="#f5333b"/><path d="M3593 573.500v8a3 3 0 0 0 3 3l2-2M3600 585.500v-8a3 3 0 0 0-3-3l-2 2" stroke="#fff" stroke-width="2.200" fill="none"/>
      <path d="M3636.800 569l8 5v11l-8 5-8-5v-11Z" fill="#6d6d6d"/><path d="M3636.800 579l8-5v11l-8 5Z" fill="#111"/><path d="M3639 586.500l3-2" stroke="#fff" stroke-width="1.500"/>
      <circle cx="3674" cy="578" r="5.500" fill="none" stroke="#777" stroke-width="1.500"/><circle cx="3674" cy="578" r="2" fill="none" stroke="#777" stroke-width="1.500"/><path d="M3677 579h6v5l-4 3Z" fill="#444"/>
      <rect x="3706" y="569" width="20.500" height="21" rx="5" fill="#4a8cff"/><path d="M3710 575.500h8v8h-8ZM3719 578l4-2.500v8l-4-2.500Z" fill="#fff"/>
      <path d="M3744.500 570.500v18" stroke="#d5d7da"/><circle cx="3772.800" cy="579.500" r="14" fill="#f36c00"/><text x="3772.800" y="585" class="dav">D</text>
      <g fill="#5f6368"><circle cx="3812.600" cy="573.500" r="2"/><circle cx="3812.600" cy="579.500" r="2"/><circle cx="3812.600" cy="585.500" r="2"/></g></svg>
  </div>
  <div class="c-book">
    <div class="bk b1"><svg width="18" height="18" viewBox="0 0 18 18"><path d="M0 0h4.500v4.500H0zM6.500 0H11v4.500H6.500zM13 0h4.500v4.500H13z" fill="#ea4335"/><path d="M0 6.500h4.500V11H0z" fill="#34a853"/><path d="M6.500 6.500H11V11H6.500z" fill="#4285f4"/><path d="M13 6.500h4.500V11H13z" fill="#fbbc05"/><path d="M0 13h4.500v4.500H0z" fill="#34a853"/><path d="M6.500 13H11v4.500H6.500zM13 13h4.500v4.500H13z" fill="#fbbc05"/></svg><span>Apps</span></div>
    <div class="bk b2"><svg width="19" height="19" viewBox="0 0 20 20"><circle cx="10" cy="10" r="9.500" fill="#5f6368"/><path d="M2 10.500l6 1v2l2 1v3.500C5 18 2 15 2 10.500ZM12 2.500c3 .8 5.500 3.500 6 6.500l-3 3-3-1-1-2H8.500V7H11V5Z" fill="#fff"/></svg><span>Book a room</span></div>
    <div class="bk b3"><svg width="20" height="20"><use href="#gh"/></svg><span>Github</span></div>
    <div class="bk b4"><svg width="20" height="20" viewBox="0 0 20 20"><path d="M10 1 19 10 10 19 1 10Z" fill="#4285f4"/><path d="M10 1l9 9-9 9 4-9Z" fill="#8ab4f8"/><circle cx="10" cy="10" r="2.500" fill="#fff"/></svg><span>GTM</span></div>
    <div class="bk b5"><svg width="20" height="18" viewBox="0 0 20 18"><path d="M2 7H18V18H2Z" fill="#4a80e8"/><path d="M2.500 0H17.500L19.500 7.500H.5Z" fill="#6b9bf5"/><path d="M6 0H10V8H5ZM14 0H17.500L19.500 8H15Z" fill="#2a56c6"/><circle cx="14" cy="13.500" r="2" fill="none" stroke="#fff" stroke-width="1.200"/></svg><span>Google Business</span></div>
    <div class="bk b6"><svg width="22" height="18" viewBox="0 0 22 18"><path d="M2 5v3M5 3v5M8 0v8M11 4v4M14 0v8M17 3v5M20 5v3" stroke="#555" stroke-width="1.300"/><text x="1" y="16.500" textLength="20" class="cis">cisco</text></svg><span>cisco learning</span></div>
  </div>
  <header class="d-head">
    <svg class="logo" viewBox="0 0 40 45" width="40" height="45"><rect width="40" height="45" rx="3" fill="#f29a2e"/><path d="M24 8 40 24V42Q40 45 37 45H14L6 35 18 18Z" fill="#e2822f"/><path d="M19 16 11 27M21 16 29 27" stroke="#fff" stroke-width="2.600"/><rect x="14.500" y="7.500" width="11" height="10" rx="1.500" fill="#fff"/><rect x="5" y="25" width="11.500" height="10" rx="1.500" fill="#fff"/><rect x="23.500" y="25" width="11.500" height="10" rx="1.500" fill="#fff"/></svg>
    <div class="dt"><h1>normalizedEntityDiagram.drawio</h1><nav><span>File</span><span>Edit</span><span>View</span><span>Arrange</span><span>Extras</span><span>Help</span><span class="lc">Last change 20 days ago</span></nav></div>
    <div class="usr">(s) David Wood 1<svg width="12" height="8" viewBox="0 0 12 8"><path d="M1 1H11L6 7Z" fill="#999"/></svg><svg width="20" height="20" viewBox="0 0 20 20"><g fill="none" stroke="#777" stroke-width="1.300"><circle cx="10" cy="10" r="9"/><ellipse cx="10" cy="10" rx="4.500" ry="9"/><path d="M10 1V19M1 10H19M2.500 5.500H17.500M2.500 14.500H17.500"/></g></svg></div>
  </header>
  <div class="d-tools"><svg viewBox="1920 726 1920 46">
    <g fill="none" stroke="#333" stroke-width="1.500"><rect x="1948" y="738.500" width="20" height="21"/><path d="M1948 743.500h20M1960 743.500v16"/></g><rect x="1961" y="744.500" width="6.500" height="14.500" fill="#bbb"/>
    <g fill="#8a8a8a"><path d="M1975.500 746.500h10l-5 6ZM2075 746.500h10l-5 6ZM2729 746.500h10l-5 6Z"/></g><path d="M2602 746.500h10l-5 6ZM2657 746.500h10l-5 6Z" fill="#aaa"/>
    <path d="M2003.500 737v25M2102.500 737v25M2193.500 737v25M2284.500 737v25M2338.500 737v25M2429.500 737v25M2558.500 737v25M2684.500 737v25" stroke="#e0e0e0"/>
    <text x="2022" y="755" textLength="43.500">100%</text>
    <g fill="none" stroke="#666" stroke-width="2.200"><circle cx="2127.500" cy="746" r="6.500"/><path d="M2132 751l6.500 7.500"/><circle cx="2165.500" cy="746" r="6.500"/><path d="M2170 751l6.500 7.500"/></g><path d="M2124 746h7M2127.500 742.500v7M2162 746h7" stroke="#666" stroke-width="1.300"/>
    <g fill="none" stroke="#c4c4c4" stroke-width="2.500"><path d="M2215 750.500c4-6 11-6 14 3M2264 750.500c-4-6-11-6-14 3"/></g><path d="M2212 744v9h9ZM2267 744v9h-9Z" fill="#c4c4c4"/>
    <g fill="#c4c4c4"><path d="M2303.500 740.500h18v3h-18ZM2309 738.500h7v2h-7ZM2305 745h15v13.500h-15ZM2358 742h10v9h-10ZM2395.500 739.500h9v8h-9ZM2404 750.500h9v8h-9ZM2449 747l8-8 9 9-8 8ZM2464 750l3.500 5a2 2 0 1 1-4-1Z"/><path d="M2480 757h27v4h-27ZM2485 750l13-13 4 4-12 12h-5Z"/></g>
    <path d="M2359 740h9v10h-9ZM2370 748h4v10h-9v-5M2405 743h4v6M2402 753h-3v-5" stroke="#c4c4c4" fill="none" stroke-width="1.800"/>
    <path d="M2526 741h14v14h-14Z" fill="#fff" stroke="#c4c4c4" stroke-width="2.500"/><path d="M2529 758h13.500v-14" stroke="#ddd" stroke-width="2.500" fill="none"/>
    <path d="M2577 748.500h15M2632 756v-8h16v-6" stroke="#555" fill="none" stroke-width="1.500"/><path d="M2590 745l6 3.500-6 3.500Z" fill="#555"/><g fill="#fff" stroke="#555"><circle cx="2632.500" cy="756.500" r="1.800"/><circle cx="2648.500" cy="741.500" r="1.800"/></g>
    <path d="M2702.500 748.500h17M2711 740v17" stroke="#000" stroke-width="3.800"/>
    <g fill="none" stroke="#555" stroke-width="1.700"><path d="M3735 742a6.500 6.500 0 0 0-3 11M3739 755a6.500 6.500 0 0 0 3-11M3734 739l3 3-3 3M3740 752l-3 3 3 3"/><path d="M3756 745v-4.500h4M3765 740.500h4v4.500M3756 751v4.500h4M3765 755.500h4v-4.500"/><path d="M3781.500 742h12v12h-12ZM3789 742v12"/><path d="M3807 747l5-5 5 5M3807 754l5-5 5 5"/></g><path d="M3760.500 745.500h4v5h-4Z" fill="#555"/></svg></div>
  <div class="d-main">
    <aside>
      <div class="sb">
        <div class="sq">Search Shapes<svg width="16" height="16" viewBox="0 0 16 16"><circle cx="6.500" cy="6.500" r="4.800" fill="none" stroke="#777" stroke-width="2"/><path d="M10 10 15 15" stroke="#777" stroke-width="2.500"/></svg></div>
        <div class="hd"><svg width="12" height="6"><path d="M1 0H11L6 5.500Z" fill="#8a8a8a"/></svg>Scratchpad<svg class="sc" width="70" height="20" viewBox="2085 857 70 20"><text x="2086" y="873" class="q">?</text><path d="M2102 867h12M2108 861v12" stroke="#bbb" stroke-width="2.500"/><path d="M2123 871l9-9 4 2-9 9-5 1ZM2124 869l4 2" fill="none" stroke="#aaa" stroke-width="1.500"/><path d="M2144 863l9 8M2153 863l-9 8" stroke="#b9c9dd" stroke-width="2.200"/></svg></div>
        <div class="dz"><div>Drag elements here</div></div>
        <div class="hd"><svg width="12" height="6"><path d="M1 0H11L6 5.500Z" fill="#8a8a8a"/></svg>General</div>
        <div class="sh"><svg viewBox="1920 1005 248 313"><g fill="#fff" stroke="#000" stroke-width="1.500">
          <rect x="1937" y="1025" width="36.500" height="18"/><rect x="1982" y="1025" width="37" height="18" rx="2.500"/><ellipse cx="2135.500" cy="1034" rx="18.500" ry="12"/>
          <rect x="1938.500" y="1058.500" width="34.500" height="35"/><circle cx="2000.700" cy="1076" r="17.300"/><path d="M2027 1067h36.500v18.500H2027ZM2031.500 1067v18.500M2059.500 1067v18.500M2090.500 1058.500l17 17.500-17 17.500-17-17.500ZM2124 1067h29.500l-6.500 18.500h-29.500Z"/>
          <path d="M1937.500 1119l8-12h19.500l8 12-8 12h-19.500ZM1988 1101.500l25 17.500-25 17.500ZM2033 1106v26c0 6 26 6 26 0v-26c0-6-26-6-26 0 0 7 26 7 26 0M2082 1111c2-4 10-5 14-1 4-2 8 0 8 4 5 2 4 8-1 9 0 5-6 6-10 4-4 3-10 2-11-2-8 1-9-5-4-7-4-3-2-8 4-7ZM2117.500 1107H2153.500v21c-11-7-20 6-36 1.500Z"/>
          <path d="M1938.500 1144h34.500v34.500h-34.500ZM1938.500 1153h34.500M1947 1144v34.500M1982 1149h28l9 7v17.500h-30.500l-6.500-6ZM1982 1149l6.500 6h30.500M1988.500 1155v18.500M2027.500 1149h29.500l6.500 12-6.500 12.500h-29.500l6-12.500ZM2079 1152h22.500l7.500 19h-37ZM2117.500 1150c12 7 20-13 36-3v25c-13-9-22 9-36 2Z"/>
          <path d="M1941.500 1187.500h17l11 9v24h-28ZM1958.500 1187.500v9h11M1986.500 1196l9-8.500h19v33h-28ZM2027.500 1192h36v15.500h-13l-5 9v-9h-18Z"/><circle cx="2090.500" cy="1191.500" r="4.500"/><path d="M2090.500 1196v15M2082 1198h17M2090.500 1211l-8.500 9M2090.500 1211l8.500 9" fill="none"/><path d="M2122.500 1187.500c34-1 34 34 0 33 9-9 9-24 0-33Z"/>
          <path d="M1942.500 1229c35-1 35 35 0 34ZM1987 1231.500h32c-6 9-6 21 0 30h-32c-6-7-6-23 0-30Z"/><path d="M2030 1264c36 0 22-14 12-19-6-8 2-13 16-13" fill="none"/><path d="M2056 1229l6 3-6 3Z" fill="#000"/><path d="M2092 1230l15.500-1-1 14-4-3-17 15 4 5-16 1 1-15 4 4 17-16ZM2136 1230l17-1-2 15-4-4-25 23-4-4 22-22Z"/></g>
          <g fill="none" stroke="#000" stroke-width="1.400"><path d="M1938 1304l33-32M1940 1305.500l33-32"/><path d="M1983 1304l33-32" stroke-dasharray="2.500 2"/><path d="M2028 1304l34-32M2079 1300l23-22M2122 1301l24-22"/></g><path d="M2076 1302.500l2-6 4 4ZM2104 1275.500l-2 6-4-4ZM2149 1275.500l-2 6-4-4Z"/>
          <text x="2034" y="1038" textLength="20" class="t10">Text</text><text x="2073" y="1029" textLength="18" class="t5 bb">Heading</text><g class="t3"><text x="2073" y="1034" textLength="30">Lorem ipsum dolor sit amet</text><text x="2073" y="1037.500" textLength="31">consectetur adipisicing elit</text><text x="2073" y="1041" textLength="31">do eiusmod tempor incididunt</text></g>
          </svg></div>
        <div class="hd r"><svg width="6" height="12"><path d="M0 1 5.500 6 0 11Z" fill="#999"/></svg>Misc</div><div class="hd r"><svg width="6" height="12"><path d="M0 1 5.500 6 0 11Z" fill="#999"/></svg>Advanced</div><div class="hd r"><svg width="6" height="12"><path d="M0 1 5.500 6 0 11Z" fill="#999"/></svg>Basic</div><div class="hd r lastrow"><svg width="6" height="12"><path d="M0 1 5.500 6 0 11Z" fill="#999"/></svg>Arrows</div>
      </div>
      <div class="sbar"></div>
      <div class="more"><svg width="12" height="12"><path d="M0 6H12M6 0V12" stroke="#db6b0e" stroke-width="2.600"/></svg>More Shapes...</div>
    </aside>
    <div class="split"><i></i><i></i></div>
    <div class="canvas">
      <svg class="dg" viewBox="2203 773 1637 711">
        <rect x="2203" y="773" width="1637" height="711" fill="#f8f9fa"/><rect x="2497" y="773" width="1036" height="711" fill="#fff"/><rect x="2497" y="773" width="1036" height="711" fill="url(#minor)"/><rect x="2497" y="773" width="1036" height="711" fill="url(#major)"/><path d="M2496.500 773v711M3533.500 773v711" stroke="#cfd1d4"/>
        <rect x="3827" y="952" width="10" height="170" rx="5" fill="#dcdcdd"/>
        <g class="ln">
          <path d="M2897 1029.600h26Q2935 1029.600 2935 1042V1133Q2935 1143 2923 1143H2528.500Q2517 1143 2517 1155V1246Q2517 1256.500 2529 1256.500H2545"/>
          <path d="M2897 1029.600h26Q2935 1029.600 2935 1042V1207Q2935 1219 2923 1219H2892Q2880.500 1219 2880.500 1230V1397Q2880.500 1408 2892 1408H2908"/>
          <path d="M2897 1029.600h26Q2935 1030 2936 1042L2958 1210Q2960 1222.500 2972 1222.500H2987"/>
          <path d="M2897 1029.600h26Q2936 1030 2943 1017L2956 993Q2960 984.700 2972 984.700H2987"/>
          <path d="M2897 1030h27" stroke-width="2"/>
        </g>
        <g class="ln"><rect x="2696.500" y="903.500" width="201" height="187.500"/><path d="M2697 936h200M2697 968.700h200M2742 936v155"/><path d="M2697 904h200v32h-200Z" fill="#fff"/>
        <path d="M2997 936h200M2997 968.700h200M3041.500 936v65"/><path d="M2997 903.500h200.500V936H2997Z" fill="#fff"/><rect x="2996.500" y="903.500" width="201" height="100"/>
        <path d="M2996.500 1173.500h201M2996.500 1206h201M3059.500 1173.500v130"/><path d="M2997 1141.500h200v32h-200Z" fill="#fff"/><rect x="2996.500" y="1141" width="201" height="162.700"/>
        <path d="M2560 1190.500h312.500v33H2560Z" fill="#fff"/><path d="M2560 1255.700h312.500M2622.500 1223.500v93"/><rect x="2559.500" y="1190.500" width="313" height="126"/>
        <path d="M2922 1341h313v32.500h-313Z" fill="#fff"/><path d="M2922 1405.800h313M2984.500 1373.500v92.500"/><rect x="2922" y="1341" width="313" height="125"/></g>
        <path d="M2996 1206.300h24M3174 1206.300h23M2560 1256h35M2837 1256h35M2922 1406h31M3204 1406h31" stroke="#000" stroke-width="2"/>
        <use href="#foot" x="2985" y="977.700" width="14" height="14"/><use href="#foot" x="2985" y="1215.500" width="14" height="14"/><use href="#foot" x="2543" y="1249.500" width="14" height="14"/><use href="#foot" x="2906" y="1401" width="14" height="14"/>
        <use href="#fold" x="2703" y="909.500" width="11" height="11"/><use href="#fold" x="3003" y="909.500" width="11" height="11"/><use href="#fold" x="3003" y="1147" width="11" height="11"/><use href="#fold" x="2565.500" y="1197" width="11" height="11"/><use href="#fold" x="2928" y="1347" width="11" height="11"/>
        <g class="tt"><text x="2797" y="925">User</text><text x="3097" y="925">Friend</text><text x="3097" y="1163">Message</text><text x="2715.500" y="1213">Workplace</text><text x="3078" y="1363">School</text></g>
        <g class="td"><text x="2704" y="958">PK</text><text x="2749.300" y="958" class="un">UserID</text><text x="2749.300" y="990">Fname</text><text x="2749.300" y="1008">Lname</text><text x="2749.300" y="1025">Hometown</text><text x="2749.300" y="1043">Gender</text><text x="2749.300" y="1060">RelationshipStatus</text><text x="2749.300" y="1078">TownOrCity</text>
        <text x="3004" y="958">PK</text><text x="3049.300" y="958" class="un">UserID</text><text x="3004" y="990">FK1</text><text x="3049.300" y="990">FriendID</text>
        <text x="3004" y="1195">PK FK</text><text x="3066" y="1195">SenderID</text><text x="3004" y="1228">FK2</text><text x="3066" y="1228">RecieverID</text><text x="3066" y="1260">DateTime</text><text x="3066" y="1295">Text</text>
        <text x="2566.700" y="1245">PK FK</text><text x="2640.700" y="1245">UserID</text><text x="2640.700" y="1278">Name</text><text x="2640.700" y="1295">StartTime</text><text x="2640.700" y="1313">EndTime</text>
        <text x="2929" y="1395">PK FK</text><text x="3003" y="1395">UserID</text><text x="3003" y="1428">Name</text><text x="3003" y="1445">StartTime</text><text x="3003" y="1463">EndTime</text></g>
      </svg>
      <div class="hs"><div></div></div>
      <div class="pt"><svg width="35" height="46" viewBox="0 0 35 46"><g fill="#888"><rect x="16" y="16" width="3" height="3"/><rect x="16" y="22" width="3" height="3"/><rect x="16" y="28" width="3" height="3"/></g></svg><b>Page-1</b><svg class="pp" width="38" height="46" viewBox="0 0 38 46"><path d="M10 21.500H28M19 12.500V30.500" stroke="#888" stroke-width="2.500"/><path d="M37.500 0V46" stroke="#e2e3e5"/></svg></div>
    </div>
  </div>
  <footer class="task tr">
    <div class="tk home"><svg><use href="#win"/></svg></div>
    <div class="find"><svg viewBox="0 0 20 20" width="20" height="20"><circle cx="12" cy="8" r="6" fill="none" stroke="#222" stroke-width="1.400"/><path d="M8 12.500 1.500 19" stroke="#222" stroke-width="1.400"/></svg>Type here to search</div>
    <div class="tk s"><svg><use href="#cort"/></svg></div><div class="tk s"><svg><use href="#tview"/></svg></div>
    <div class="tk"><svg><use href="#edge"/></svg></div><div class="tk"><svg><use href="#folder"/></svg></div><div class="tk"><svg><use href="#store"/></svg></div><div class="tk"><svg><use href="#mail"/></svg><em>99+</em></div><div class="tk"><svg><use href="#pyf"/></svg></div><div class="tk run"><svg><use href="#chrome"/></svg></div><div class="tk"><svg><use href="#vs"/></svg></div><div class="tk"><svg><use href="#shark"/></svg></div><div class="tk"><svg><use href="#discord"/></svg></div><div class="tk run"><svg><use href="#fork"/></svg></div><div class="tk"><svg><use href="#steam"/></svg></div><div class="tk"><svg><use href="#hex"/></svg></div><div class="tk run"><svg><use href="#teams"/></svg></div><div class="tk run"><svg><use href="#origin"/></svg></div><div class="tk run act"><svg><use href="#word"/></svg></div>
    <svg class="tray" viewBox="3463 1545 377 50"><path d="M3510.500 1572.500l7-7 7 7" stroke="#fff" fill="none" stroke-width="1.500"/>
      <path d="M3539 1575a4 4 0 0 1 0-8 6.500 6.500 0 0 1 11-1 4.500 4.500 0 0 1 1 9Z" fill="#1a86d9"/><circle cx="3550.500" cy="1575" r="5" fill="#fff"/><path d="M3548 1575a2.500 2.500 0 0 1 5 0M3553 1575.500a2.500 2.500 0 0 1-5 0" fill="none" stroke="#1a86d9" stroke-width="1.200"/>
      <path d="M3569 1575a4 4 0 0 1 0-8 6.500 6.500 0 0 1 11-1 4.500 4.500 0 0 1 1 9Z" fill="#b8bcc2"/><circle cx="3581" cy="1575.500" r="5" fill="#d92b2b"/><path d="M3579 1573.500l4 4M3583 1573.500l-4 4" stroke="#fff" stroke-width="1.300"/>
      <path d="M3601.500 1566.500h14v9h-14Z" fill="none" stroke="#fff" stroke-width="1.300"/><path d="M3604 1568.500h9.500v5h-9.500ZM3615.500 1569h2v4h-2ZM3598 1562h5v4l-2.500 2-2.500-2Z" fill="#fff"/>
      <g fill="none" stroke="#fff" stroke-width="1.400"><path d="M3631 1576.500C3631 1568 3637 1562.500 3645 1562.500" opacity=".5"/><path d="M3634 1576.500c0-6 4-10 11-10.500M3637.500 1577c0-4 3-7 7.500-7"/><path d="M3658 1567.500h3l4-4v13l-4-4h-3ZM3668 1567c1.500 2 1.500 4 0 6M3670.500 1564.500c3 3.500 3 7.500 0 11"/><path d="M3673 1562c4.500 5 4.500 11 0 16" opacity=".5"/></g><circle cx="3643.500" cy="1576" r="1.800" fill="#fff"/>
      <text x="3728" y="1564.500" class="ck">12:20</text><text x="3690.500" y="1587" textLength="75.500" class="cd">20/04/2020</text>
      <path d="M3788.500 1560h20v16h-10l-4 4v-4h-6Z" fill="#fff"/><path d="M3792 1564.500h13M3792 1568h13M3792 1571.500h9" stroke="#1d2840" stroke-width="1.200"/><circle cx="3809" cy="1579.500" r="10.500" fill="#333740" stroke="#9aa0a8"/><text x="3809" y="1584.500" class="nb">20</text><path d="M3834.500 1545v50" stroke="#5a6478"/></svg>
  </footer>
</section>
</body>
</html>
```
FILE: styles.css
```css
*{box-sizing:border-box}
html,body{margin:0;padding:0}
body{position:relative;width:3840px;height:1595px;background:#000;overflow:hidden;font:12px "Open Sans","Noto Sans",sans-serif;color:#444}
svg{display:block;flex:none}
.defs{position:absolute}
p,h1,h2,h3,h4,ul{margin:0;padding:0;font-weight:400}
.screen{position:absolute;width:1920px;height:1080px;overflow:hidden;display:flex;flex-direction:column}
.left{left:0;top:0}
.right{left:1920px;top:515px;background:#fbfbfb}

.w-title{height:34px;background:#2b579a;flex:none}
.w-bar{width:1920px;height:34px}
.wt{font-size:12px;fill:#fff}
.navy{fill:#16305e}
.on{font-size:10px;fill:#2b579a}
.av{font-size:10px;fill:#fff;text-anchor:middle}
.w-tabs{height:29px;flex:none;background:#f3f2f1;display:flex;align-items:center;gap:28.800px;padding:0 12px 0 17px;font-size:12.500px}
.w-tabs .t1{margin-right:4px}
.w-tabs b{font-weight:600;height:28px;line-height:28px;box-shadow:inset 0 -3px #2b579a;letter-spacing:.1px}
.w-act{margin-left:auto;display:flex;gap:8px;align-self:flex-start;padding-top:3px}
.w-act button{height:24px;border:1px solid #e1dfdd;border-radius:2px;background:#fff;display:flex;align-items:center;gap:4px;padding:0 9px 0 7px;font:600 12.300px "Open Sans",sans-serif;letter-spacing:-.1px;color:#2b579a}
.ribbon{height:98px;flex:none;display:flex;background:#f3f2f1;border-bottom:1px solid #c8c6c4;position:relative;z-index:1;box-shadow:0 2px 6px rgba(0,0,0,.12)}
.g{flex:none;height:97px;position:relative;background:linear-gradient(#b5b3b1,#b5b3b1) right 5px/1px 88px no-repeat}
.g svg{width:100%;height:97px}
.g text{font-size:12px;fill:#444}
.g1{width:165px}.g2{width:282px}.g3{width:241px}.g4{width:1045px}.g5{width:87px}.g6{width:58px}
.g1 svg{width:164px}.g2 svg{width:281px}.g3 svg{width:240px}.g5 svg{width:86px}.g6 svg{width:57px}
.g text.k{fill:#222}.g text.dis{fill:#aaa}
.g .i16{font-size:16px}.g .i14{font-size:14px}.g .i12{font-size:12px}.g .i8{font-size:8px;fill:#2b88d8}
.g .bb,.bb{font-weight:700}.g .se{font-family:"Liberation Serif",serif;font-style:italic;font-size:16px}.un{text-decoration:underline}
.g .glow{font-size:16px;font-weight:600;fill:#fff;stroke:#1a76c8;stroke-width:1.300px}
.g .nums text{font-size:6.500px;fill:#2b88d8;font-weight:600}
.g .sa{font-size:10px;fill:#2b88d8;font-weight:600}.g .sz{font-size:10px}
.g .rb{font-size:10px;fill:#a33ba8}.g .rc{font-size:10px;fill:#2b88d8}
.g4{display:flex;flex-direction:column}
.gal{margin:7px 0 0 9.500px;width:1025px;height:60px;border:1px solid #c8c6c4;background:#fff;display:flex}
.st{width:72px;height:58px;padding:9px 5px 0 7px;display:flex;flex-direction:column;color:#666;letter-spacing:-.35px}
.st i{font:13.500px/26px Lato,sans-serif;letter-spacing:-.2px;height:26px;width:59px;overflow:hidden;white-space:nowrap;color:#000}
.st span{font-size:12px;line-height:16px;text-align:center;margin:4px -8px 0 -10px;white-space:nowrap}
.sel{box-shadow:inset 0 0 0 4px #c6c6c6}
.h1 i{font-size:17px;color:#2f5496}.h2 i{font-size:15px;color:#2f5496}.h3 i{font-size:14px;color:#1f3763}.h4 i{color:#2f5496;font-style:italic}.h5 i{color:#2f5496}
.ti i{font-size:31px;line-height:24px;letter-spacing:-.5px;font-weight:300}.su i{letter-spacing:1.100px;color:#5a5a5a;font-size:13px}
.it i{font-style:italic;color:#404040}.em i{color:#000}.in i{color:#4472c4}.bo i{font-weight:700}
.gs{background:#f3f2f1;width:15px}.gs svg{width:15px;height:58px}
.gl{display:flex;justify-content:space-between;align-items:center;margin-top:13px;padding:0 3px 0 9px;font-size:12px;letter-spacing:-.4px;line-height:16px}
.gl svg{width:9px;height:9px}
.gl span:nth-child(2){margin-left:8px}
.col{margin:88px 0 0 24px}

.desk{flex:none;height:857px;background:#e6e6e6;overflow:hidden;color:#000;font:13.500px/20px Lato,Carlito,sans-serif;letter-spacing:.065px}
.pages{display:flex;gap:18px;padding-left:151px}
.page{width:792px;height:701px;background:#fff;border:1px solid #c2c2c2;border-top:0;padding-left:94px;white-space:nowrap;flex:none}
.p1>ul:first-child{margin-top:-.5px}
.page ul{list-style:none}
.page li{padding-left:49px;position:relative}
.page li::before{content:"";position:absolute;left:25px;top:7px;width:6px;height:6px;border-radius:50%;background:#000}
.page u{text-decoration:none;background:repeating-linear-gradient(90deg,#9a6f1c 0 2px,transparent 2px 3.300px) 0 100%/100% 2px no-repeat}
.m10{margin-top:10.300px!important}
.para{line-height:19.350px}
h2{font-size:16px;line-height:24px;color:#2f5496;margin-top:10px;letter-spacing:-.23px}
h3{font-size:15px;line-height:23px;color:#1f3763;letter-spacing:-.23px}
h4{font-size:13.500px;line-height:20px;font-style:italic;color:#2f5496;letter-spacing:.21px;margin-top:10px}
.page .ents{line-height:20.400px}
.p2{padding-top:7px}
.caret{width:1px;height:18px;background:#000;margin-top:10px}
.p3{margin:14px 0 0 556px;border-top:1px solid #c2c2c2;height:160px;padding-top:93px}
.p3 h3{line-height:24.200px}
.status{height:22px;flex:none;border-top:1px solid #c8c6c4;background:#f3f2f1}
.status svg{width:1920px;height:21px}
.status text{font-size:12px;fill:#555}.status .dk{fill:#333}
.task{display:flex;flex:none;position:relative}
.tl{height:40px;background:linear-gradient(90deg,#22343d,#21353f 55%,#1b2742)}
.tk{width:49px;display:flex;align-items:center;justify-content:center;flex:none;position:relative}
.tk svg{width:25px;height:25px}
.tl .s{width:48px}
.tl .s+.tk:not(.s){margin-left:3px}
.run::after{content:"";position:absolute;left:4px;right:5px;bottom:0;height:2px;background:#76b9ed}
.act{background:#4b5a66}
.act::after{left:0;right:0}
.tk em{position:absolute;left:20px;top:19px;width:28px;height:17px;border-radius:9px;border:1px solid #999;background:#30373d;color:#fff;font:600 11px/14px "Open Sans",sans-serif;text-align:center}
.clock{margin-left:auto;width:58px;margin-right:6px;color:#fff;font-size:12px;letter-spacing:-.5px;display:flex;flex-direction:column;align-items:center;line-height:18px;padding-top:1px;white-space:nowrap}

.c-tabs{height:42px;flex:none;display:flex;background:#e5e9ec;padding-left:11px}
.ct{width:298.600px;flex:none;display:flex;align-items:center;padding-left:15px;gap:10px;background:linear-gradient(#8a8d91,#8a8d91) right 9px/1px 25px no-repeat;font-size:14.400px;letter-spacing:-.25px;color:#5a5d61}
.ct.last{background:none}
.ct.on{background:#fff;border-radius:9px 9px 0 0;width:300px}
.ct>svg:first-child{width:20px}
.ct span{width:218px;white-space:nowrap;overflow:hidden;-webkit-mask-image:linear-gradient(90deg,#000 88%,transparent);mask-image:linear-gradient(90deg,#000 88%,transparent)}
.ct .x{width:12px;height:12px}
.c-win{width:415px;height:42px}
.c-bar{height:46px;flex:none;background:#fff;display:flex}
.c-nav{width:134px;height:46px}
.omni{width:1434px;height:35px;margin-top:5px;border-radius:17px;background:#f1f3f4;display:flex;align-items:center;padding-left:16px}
.url{margin-left:14px;font-size:16.750px;letter-spacing:0;color:#5f6368;white-space:nowrap}
.url b{font-weight:400;color:#202124;letter-spacing:-.2px}
.oi{margin-left:auto;margin-right:12px}
.c-ext{width:352px;height:46px}
.dav{font:15px "Open Sans",sans-serif;fill:#fff;text-anchor:middle}
.c-book{height:41px;flex:none;background:#fff;border-bottom:2px solid #d9dce0;display:flex;align-items:center;padding:0 0 7px 19px;font-size:14.200px;letter-spacing:-.1px;color:#4a4d51}
.bk{display:flex;align-items:center;gap:10px;white-space:nowrap;flex:none}
.b1{width:82px}.b2{width:137px;gap:11px}.b3{width:95px;gap:9px}.b4{width:82px}.b5{width:157px}.b6{gap:10px}
.cis{font:bold 9px "Liberation Sans",sans-serif;fill:#555}
.d-head{height:82px;flex:none;display:flex;background:#fbfbfb;border-bottom:1px solid #dadce0;font-family:"Liberation Sans",Arial,sans-serif;color:#000}
.logo{margin:17px 0 0 20px}
.dt{margin-left:25px}
.dt h1{font-size:22.500px;line-height:26px;margin-top:10px}
.dt nav{display:flex;gap:18.500px;font-size:17.500px;line-height:20px;margin-top:13px}
.lc{color:#888;margin-left:4px}
.usr{margin-left:auto;margin-right:19px;height:20px;margin-top:6px;display:flex;align-items:center;gap:7px;font-size:13.300px}
.usr svg:first-child{margin-left:5px}
.d-tools{height:47px;flex:none;background:#fbfbfb;border-bottom:1px solid #dadce0}
.d-tools svg{width:1920px;height:46px}
.d-tools text{font:17.500px "Liberation Sans",sans-serif;fill:#000}
.d-main{height:772px;flex:none;display:flex;font-family:"Liberation Sans",Arial,sans-serif;color:#000}
aside{width:266px;border-right:1px solid #dadce0;display:grid;grid-template:726px 46px/248px 17px;background:#fbfbfb}
.sb{overflow:hidden;font-size:16.250px;letter-spacing:-.08px}
.sq{margin:17px 10px 20px 10px;height:35px;border:1px solid #d5d5d5;border-radius:4px;background:#fff;display:flex;align-items:center;justify-content:space-between;padding:0 6px 0 8px;font-size:15px;color:#777}
.hd{height:43.200px;border-top:1px solid #e5e5e5;display:flex;align-items:center;padding-left:1px;gap:5px;position:relative}
.hd.r{padding-left:5px;gap:7px}
.lastrow{border-bottom:1px solid #e5e5e5}
.sc{margin-left:auto;margin-right:13px}
.q{font:bold 15px "Liberation Sans",sans-serif;fill:#aaa}
.dz{height:73px;border-top:1px solid #e5e5e5;padding:15.500px 15px 0 20px}
.dz div{height:41px;border:2px dotted #b0b0b0;border-radius:10px;text-align:center;font-size:17.500px;line-height:36px;color:#a3a3a3}
.sh{height:313px;border-top:1px solid #e5e5e5}
.sh svg{width:248px;height:313px}
.t10{font-size:10px}.t5{font-size:5px}.t3{font-size:2.600px;fill:#777}
.sbar{width:11px;height:534px;border-radius:6px;background:#e0e0e0;margin:3px 0 0 3px}
.more{grid-column:1/3;border-top:1px solid #dadce0;display:flex;align-items:center;gap:7px;padding:2px 0 0 18px;color:#db6b0e;font-weight:700;font-size:16.250px;letter-spacing:-.05px}
.split{width:17px;border-right:1px solid #dadce0;background:#fbfbfb;display:flex;gap:1px;align-items:center;justify-content:center}
.split i{width:1.500px;height:8px;background:#777}
.canvas{flex:1;display:flex;flex-direction:column}
.dg{width:1637px;height:711px}
.ln{fill:none;stroke:#1a1a1a;stroke-width:1.250px}
.tt{font:bold 15px "Liberation Sans",sans-serif;text-anchor:middle}
.td{font:15px "Liberation Sans",sans-serif}
.hs{height:15px;background:#f8f9fa;padding:2px 0 0 499px;flex:none}
.hs div{width:617px;height:11px;border-radius:5px;background:#dededf}
.pt{height:46px;background:#f1f3f4;border-top:1px solid #dadce0;display:flex}
.pt b{width:172px;background:#fff;border:1px solid #e2e3e5;border-width:0 1px;text-align:center;font-size:15px;line-height:50px;letter-spacing:.2px;color:#188038}
.tr{height:50px;background:linear-gradient(90deg,#22343d,#21353f 60%,#1b2742)}
.tr .tk{width:62.070px}
.tr .home{width:60px}
.find{width:430px;background:#f2f2f2;border:1px solid #aaa;border-left:0;display:flex;align-items:center;gap:14px;padding-left:16px;font-size:17.700px;color:#333}
.tr .s{width:60px}
.tr .s+.tk:not(.s){margin-left:2px}
.tr .run::after{height:3px;left:6px;right:6px}
.tr .act::after{left:0;right:0}
.tr .tk svg{width:29px;height:29px}
.tr .tk em{left:26px;top:23px;width:33px;height:21px;border-radius:11px;font-size:13px;line-height:18px}
.tr .s svg{width:26px;height:26px}
.tray{width:377px;height:50px;margin-left:auto}
.ck{font-size:14.500px;fill:#fff;text-anchor:middle}
.cd{font-size:14.500px;fill:#fff}
.nb{font-size:13px;fill:#fff;text-anchor:middle;font-weight:600}
```
